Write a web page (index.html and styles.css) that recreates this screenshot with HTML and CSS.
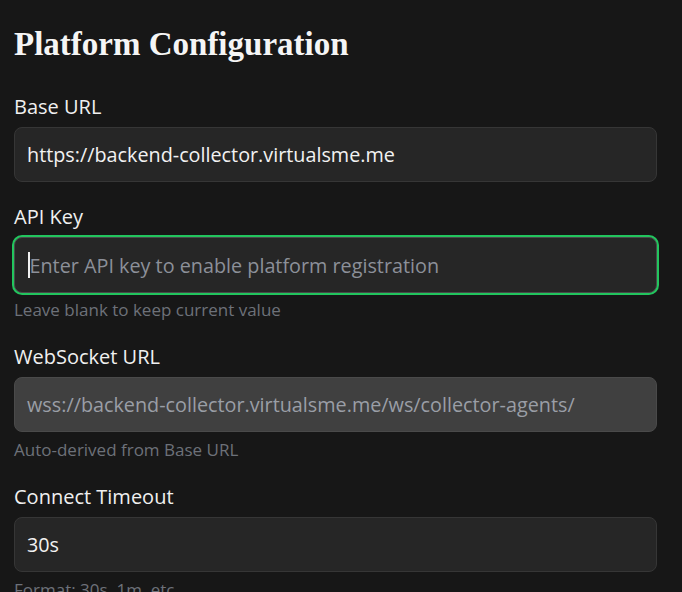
FILE: index.html
```html
<!DOCTYPE html>
<html lang="en">
<head>
<meta charset="utf-8">
<title>Platform Configuration</title>
<link rel="stylesheet" href="styles.css">
</head>
<body>
<main class="page">
  <h1 class="title">Platform Configuration</h1>
  <div class="field">
    <label class="label">Base URL</label>
    <div class="input">https://backend-collector.virtualsme.me</div>
  </div>
  <div class="field">
    <label class="label">API Key</label>
    <div class="input focused"><span class="caret"></span><span class="placeholder">Enter API key to enable platform registration</span></div>
    <div class="hint">Leave blank to keep current value</div>
  </div>
  <div class="field">
    <label class="label">WebSocket URL</label>
    <div class="input disabled">wss://backend-collector.virtualsme.me/ws/collector-agents/</div>
    <div class="hint">Auto-derived from Base URL</div>
  </div>
  <div class="field">
    <label class="label">Connect Timeout</label>
    <div class="input">30s</div>
    <div class="hint">Format: 30s, 1m, etc.</div>
  </div>
</main>
</body>
</html>
```
FILE: styles.css
```css
html, body {
  margin: 0;
  padding: 0;
  background: #171717;
}
body {
  font-family: "Open Sans", "Noto Sans", sans-serif;
  color: #f2f2f2;
  overflow: hidden;
}
.page {
  padding: 24px 25px 0 14px;
  display: flex;
  flex-direction: column;
}
.title {
  font-family: "Liberation Serif", serif;
  font-weight: 700;
  font-size: 33px;
  line-height: 40px;
  margin: 0 0 29px 0;
  color: #f5f5f5;
}
.field {
  display: flex;
  flex-direction: column;
  margin-bottom: 21px;
}
.label {
  font-size: 20px;
  line-height: 27px;
  color: #f0f0f0;
  margin-bottom: 7px;
}
.input {
  box-sizing: border-box;
  height: 55px;
  display: flex;
  align-items: center;
  padding: 0 12px;
  border: 1px solid #363636;
  border-radius: 8px;
  background: #262626;
  font-size: 19.8px;
  color: #f2f2f2;
  white-space: nowrap;
  overflow: hidden;
}
.input.focused {
  height: 56px;
  box-shadow: 0 0 0 2px #22c55e;
  border-color: #4a4a4a;
  margin-bottom: -1px;
}
.input.disabled {
  background: #404040;
  border-color: #4a4a4a;
  color: #9a9ea6;
}
.placeholder {
  color: #8c9099;
}
.caret {
  display: inline-block;
  width: 1.5px;
  height: 26px;
  background: #f0f0f0;
  margin-left: 1px;
}
.hint {
  font-size: 17px;
  line-height: 24px;
  color: #6d7179;
  margin-top: 6px;
}
```
